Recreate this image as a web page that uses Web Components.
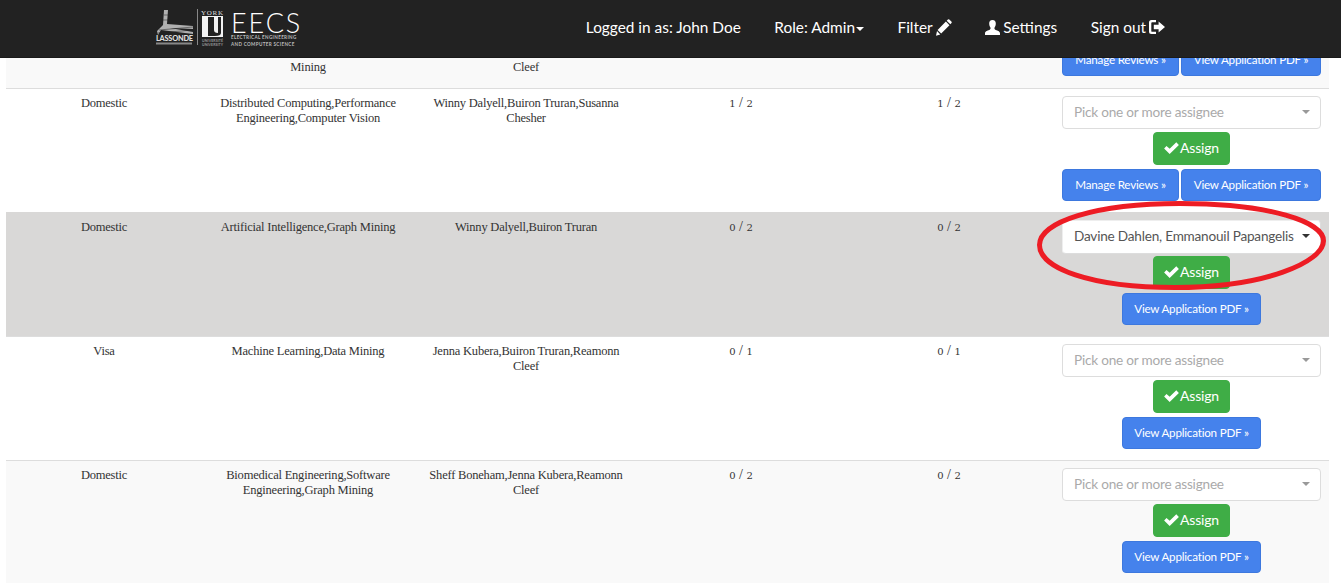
<!DOCTYPE html>
<html lang="en"><head><meta charset="utf-8"><title>Applications</title>
<style>
html,body{margin:0;padding:0;background:#fff;overflow:hidden;height:583px}
</style></head><body>
<app-page>
  <top-nav slot="nav"></top-nav>
  <review-row alt>
    <span slot="type">&nbsp;</span>
    <span slot="areas">&nbsp;<br>Mining</span>
    <span slot="profs">&nbsp;<br>Cleef</span>
    <score-frac slot="a"></score-frac>
    <score-frac slot="b"></score-frac>
    <assign-panel slot="actions" buttons-only manage></assign-panel>
  </review-row>
  <review-row>
    <span slot="type">Domestic</span>
    <span slot="areas">Distributed Computing,Performance Engineering,Computer Vision</span>
    <span slot="profs">Winny Dalyell,Buiron Truran,Susanna Chesher</span>
    <score-frac slot="a" n="1" d="2"></score-frac>
    <score-frac slot="b" n="1" d="2"></score-frac>
    <assign-panel slot="actions" manage></assign-panel>
  </review-row>
  <review-row marked>
    <span slot="type">Domestic</span>
    <span slot="areas">Artificial Intelligence,Graph Mining</span>
    <span slot="profs">Winny Dalyell,Buiron Truran</span>
    <score-frac slot="a" n="0" d="2"></score-frac>
    <score-frac slot="b" n="0" d="2"></score-frac>
    <assign-panel slot="actions" value="Davine Dahlen, Emmanouil Papangelis"></assign-panel>
    <red-ring slot="overlay"></red-ring>
  </review-row>
  <review-row>
    <span slot="type">Visa</span>
    <span slot="areas">Machine Learning,Data Mining</span>
    <span slot="profs">Jenna Kubera,Buiron Truran,Reamonn Cleef</span>
    <score-frac slot="a" n="0" d="1"></score-frac>
    <score-frac slot="b" n="0" d="1"></score-frac>
    <assign-panel slot="actions"></assign-panel>
  </review-row>
  <review-row alt>
    <span slot="type">Domestic</span>
    <span slot="areas">Biomedical Engineering,Software Engineering,Graph Mining</span>
    <span slot="profs">Sheff Boneham,Jenna Kubera,Reamonn Cleef</span>
    <score-frac slot="a" n="0" d="2"></score-frac>
    <score-frac slot="b" n="0" d="2"></score-frac>
    <assign-panel slot="actions"></assign-panel>
  </review-row>
</app-page>
<script>
const def=(name,html)=>{
  class C extends HTMLElement{
    constructor(){super();this.attachShadow({mode:'open'});}
    connectedCallback(){
      this.shadowRoot.innerHTML=typeof html==='function'?html(this):html;
    }
  }
  customElements.define(name,C);
};
const ICONS={
 ok:'<svg viewBox="0 0 16 13" width="15" height="12"><path fill="currentColor" d="M0 7 L2.6 4.2 L6 7.4 L13.2 0.4 L16 3.2 L6 13 Z"/></svg>',
 pencil:'<svg viewBox="0 0 16 17" width="16" height="17"><path fill="currentColor" d="M11.9 .6 Q12.6 0 13.3 .5 L15.6 2.8 Q16 3.5 15.5 4.1 L14.3 5.3 L10.7 1.8 Z M9.9 2.6 L13.5 6.2 L5.2 14.6 L1.6 11 Z M1 12 L4.3 15.4 L0 16.8 Z"/></svg>',
 user:'<svg viewBox="0 0 15 15" width="15" height="15"><path fill="currentColor" d="M7.5 0 C9.8 0 10.9 1.6 10.8 3.8 C10.7 5.6 10.2 6.6 9.6 7.6 C9.3 8.2 9.4 9 10 9.5 C11.6 10.6 15 10.8 15 13.5 L15 15 L0 15 L0 13.5 C0 10.8 3.4 10.6 5 9.5 C5.6 9 5.7 8.2 5.4 7.6 C4.8 6.6 4.3 5.6 4.2 3.8 C4.1 1.6 5.2 0 7.5 0 Z"/></svg>',
 logout:'<svg viewBox="0 0 16 14" width="16" height="14"><path fill="currentColor" d="M2.5 0 L7 0 L7 2.2 L3.2 2.2 Q2.3 2.2 2.3 3.1 L2.3 10.9 Q2.3 11.8 3.2 11.8 L7 11.8 L7 14 L2.5 14 Q0 14 0 11.5 L0 2.5 Q0 0 2.5 0 Z M9.6 1.6 L16 7 L9.6 12.4 L9.6 9.3 L4.8 9.3 L4.8 4.7 L9.6 4.7 Z"/></svg>'
};
def('app-page',`<style>
  :host{display:block;position:relative;font-family:"Liberation Serif",serif;color:#333}
  main{display:flex;flex-direction:column;padding:37px 12px 0 6px}
  </style><slot name="nav"></slot><main><slot></slot></main>`);
def('glyph-icon',h=>`<style>:host{display:inline-flex;align-items:center}svg{display:block}</style>${ICONS[h.getAttribute('name')]}`);
def('york-logo',`<style>
  :host{display:flex;align-items:flex-start;gap:5px;height:40px}
  svg{display:block;flex:none}
  .t{display:flex;flex-direction:column;color:#fff;width:70px;white-space:nowrap}
  .big{font:300 27px/22px Lato,sans-serif;letter-spacing:1.9px;height:22px;margin-top:3px}
  .sm{font:700 4.6px/6.5px Lato,sans-serif;color:#bbb;letter-spacing:.34px}
  </style>
  <svg width="71" height="40" viewBox="0 0 71 40">
    <path d="M9 1 L13 1 L12 15 L38 17 L38 20 L15 19 L38 23 L38 25 L6 21 L3 26 L2 22 L8 16 Z" fill="#c9c9c9" opacity=".85"/>
    <path d="M4 21 L38 18 M3 24 L38 21 M9 6 L13 6 M8 11 L13 11" fill="none" stroke="#222" stroke-width=".5"/>
    <text x="1" y="32" font-family="Lato,sans-serif" font-weight="900" font-size="7.4" fill="#ddd" textLength="37">LASSONDE</text>
    <rect x="1" y="33.5" width="36" height="2" fill="#888"/>
    <rect x="42" y="0" width="1" height="36" fill="#888"/>
    <text x="46" y="6" font-family="Liberation Serif,serif" font-size="7" fill="#ddd" textLength="22">YORK</text>
    <path d="M47 7 H68 V28 H47 Z" fill="#f2f2f2"/>
    <path d="M53 8 H59 V21 Q59 24 63 24 V8 H66 V24 Q66 27 60 27 H53 Z" fill="#222"/>
    <text x="47" y="33" font-family="Lato,sans-serif" font-size="3.5" font-weight="700" fill="#999" textLength="21">UNIVERSITÉ</text>
    <text x="47" y="37" font-family="Lato,sans-serif" font-size="3.5" font-weight="700" fill="#999" textLength="21">UNIVERSITY</text>
  </svg>
  <div class="t"><div class="big">EECS</div><div class="sm">ELECTRICAL ENGINEERING</div><div class="sm">AND COMPUTER SCIENCE</div></div>`);
def('top-nav',`<style>
  :host{display:flex;align-items:center;position:fixed;top:0;left:0;right:0;height:58px;z-index:5;background:#222;color:#fff;
    font:15.4px/20px Lato,sans-serif;box-sizing:border-box;padding:0 176px 0 155px;border-bottom:1px solid #1a1a1a}
  .links{margin-left:auto;display:flex;align-items:center;gap:33.5px;margin-top:-3px}
  york-logo{margin-top:1px}
  .i{display:inline-flex;align-items:center;gap:3px;white-space:nowrap}
  .caret{display:inline-block;border:4px solid transparent;border-top-color:#fff;border-bottom:0;margin-left:1px;margin-top:3px}
  </style>
  <york-logo></york-logo>
  <div class="links">
   <span class="i">Logged in as: John Doe</span>
   <span class="i" style="gap:0">Role: Admin<span class="caret"></span></span>
   <span class="i">Filter <glyph-icon name="pencil"></glyph-icon></span>
   <span class="i"><glyph-icon name="user"></glyph-icon>Settings</span>
   <span class="i">Sign out <glyph-icon name="logout"></glyph-icon></span>
  </div>`);
def('review-row',`<style>
  :host{display:grid;position:relative;grid-template-columns:196px 212px 224px 206px 210px 275px;grid-template-rows:minmax(0,1fr);
    height:124px;box-sizing:border-box;border-top:1px solid #ddd;background:#fff;
    font:12.5px/15px "Liberation Serif",serif;letter-spacing:-.21px;color:#333;text-align:center}
  :host([alt]){background:#f9f9f9}
  :host([marked]){background:#d9d8d7;border-top-color:#d9d8d7}
  :host(:first-of-type){height:51px;border-top:0;overflow:hidden}
  .c{padding:7px 8px 0;min-width:0}
  .act{padding:7px 8px 0;display:flex;flex-direction:column;justify-content:flex-start;min-height:0}
  :host(:first-of-type) .act{justify-content:flex-end;padding:0 8px 12px}
  :host(:first-of-type) .c{padding-top:8px}
  </style>
  <div class="c"><slot name="type"></slot></div>
  <div class="c"><slot name="areas"></slot></div>
  <div class="c"><slot name="profs"></slot></div>
  <div class="c"><slot name="a"></slot></div>
  <div class="c"><slot name="b"></slot></div>
  <div class="act"><slot name="actions"></slot></div>
  <slot name="overlay"></slot>`);
def('score-frac',h=>{
 const n=h.getAttribute('n'),d=h.getAttribute('d');
 return `<style>
  :host{display:inline-flex;align-items:baseline;gap:3.5px;font:14px/13px "Liberation Serif",serif;letter-spacing:0;color:#333}
  b{font:400 10px/13px "DejaVu Serif",serif}
  i{font-style:normal}
  </style>${n?`<b>${n}</b>`:''}<i>/</i>${d?`<b>${d}</b>`:''}`;
});
def('assign-panel',h=>{
 const v=h.getAttribute('value');
 const top=h.hasAttribute('buttons-only')?'':`<pick-select ${v?'selected':''}>${v||'Pick one or more assignee'}</pick-select>
  <div class="gap1"></div>
  <bs-btn kind="ok"><glyph-icon name="ok"></glyph-icon>Assign</bs-btn>
  <div class="gap2"></div>`;
 return `<style>
  :host{display:flex;flex-direction:column;align-items:center;flex:none}
  .gap1{height:3px}.gap2{height:4px}
  .row{display:flex;gap:2px;justify-content:center}
  </style>
  ${top}
  <div class="row">${h.hasAttribute('manage')?'<bs-btn kind="pri" style="width:117px">Manage Reviews »</bs-btn>':''}<bs-btn kind="pri" style="width:${h.hasAttribute('manage')?140:139}px">View Application PDF »</bs-btn></div>`;
});
def('pick-select',`<style>
  :host{display:flex;align-items:center;justify-content:space-between;box-sizing:border-box;width:259px;height:33px;padding:0 10px 2px 11px;
    background:#fff;border:1px solid #ddd;border-radius:4px;font:13.6px/20px Lato,sans-serif;color:#aaa;white-space:nowrap}
  :host([selected]){color:#555;border-color:#eee #ddd #ddd #eee;height:34px;margin-bottom:-1px}
  .caret{border:4px solid transparent;border-top-color:#999;border-bottom:0;flex:none}
  :host([selected]) .caret{border-top-color:#333}
  </style><slot></slot><span class="caret"></span>`);
def('bs-btn',`<style>
  :host{display:inline-flex;align-items:center;justify-content:center;box-sizing:border-box;border:1px solid;border-radius:4px;color:#fff;white-space:nowrap}
  :host([kind=ok]){background:#3fad46;border-color:#3fad46;font:14px/20px Lato,sans-serif;height:33px;width:77px;gap:1px;padding-bottom:1px}
  :host([kind=pri]){background:#4582ec;border-color:#3d78de;font:11.65px/18px Lato,sans-serif;height:32px}
  </style><slot></slot>`);
def('red-ring',`<style>
  :host{position:absolute;left:1025px;top:-16px;width:310px;height:100px;pointer-events:none}
  svg{display:block}
  </style><svg width="310" height="100" viewBox="0 0 310 100"><path transform="translate(-1031 -197)" d="M1180 203.5 C1270 203.5 1324 222 1323.5 241 C1323 262 1265 287.5 1175 287.5 C1090 287.5 1039.5 268 1039.5 245 C1039.5 222 1095 203.5 1180 203.5 Z" fill="none" stroke="#ed1c24" stroke-width="5"/></svg>`);
</script>
</body></html>
